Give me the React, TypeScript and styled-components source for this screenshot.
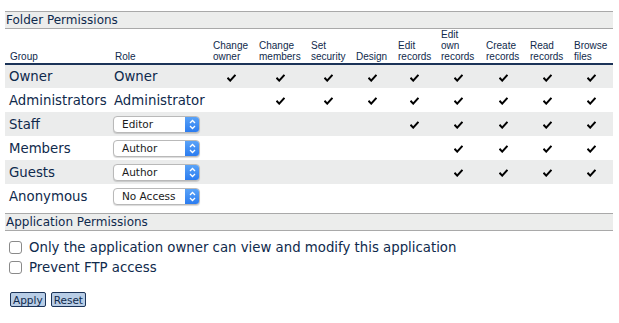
import React from 'react';
import styled, { createGlobalStyle } from 'styled-components';

const GlobalStyle = createGlobalStyle`
  body {
    margin: 0;
    background: #fff;
    font-family: "DejaVu Sans", Verdana, sans-serif;
    color: #0f2a4c;
  }
`;

const Page = styled.div`
  padding: 11px 6px 0 5px;
`;

const SectionHeader = styled.div`
  background: #ecedec;
  border-top: 1px solid #a9a9a9;
  border-bottom: 1px solid #a9a9a9;
  font-size: 12px;
  line-height: 16px;
  padding: 0 1px;
  color: #0f2a4c;
`;

const Table = styled.table`
  width: 608px;
  border-collapse: collapse;
  table-layout: fixed;
`;

const Th = styled.th`
  font-family: "Liberation Sans", Arial, sans-serif;
  font-size: 10px;
  line-height: 11px;
  font-weight: normal;
  text-align: left;
  vertical-align: bottom;
  padding: 0 0 1px 5px;
  border-bottom: 2px solid #1b3358;
  color: #0f2a4c;
`;

const Row = styled.tr<{ $shaded: boolean }>`
  height: 24px;
  background: ${(p) => (p.$shaded ? '#ebecec' : '#fff')};
`;

const TextCell = styled.td`
  font-size: 13.3px;
  padding: 0 0 0 4px;
  white-space: nowrap;
`;

const CheckCell = styled.td`
  text-align: center;
  padding: 0;
`;

const SelectBox = styled.div`
  display: inline-flex;
  align-items: stretch;
  width: 87px;
  height: 17px;
  margin-left: -1px;
  border: 1px solid #b9b9b9;
  border-radius: 4px;
  background: #fff;
  box-sizing: border-box;
  overflow: hidden;
  vertical-align: middle;
  box-shadow: 0 1px 1px rgba(0, 0, 0, 0.15);
`;

const SelectLabel = styled.span`
  flex: 1;
  font-size: 10.5px;
  line-height: 15px;
  padding-left: 8px;
  color: #1a1a1a;
`;

const SelectArrow = styled.span`
  width: 14px;
  background: linear-gradient(#5aa3f7, #2b7cf0);
  display: flex;
  align-items: center;
  justify-content: center;
`;

const AppSection = styled.div`
  margin-top: 5px;
`;

const CheckList = styled.div`
  padding: 8px 0 0 4px;
  display: flex;
  flex-direction: column;
  gap: 3px;
`;

const CheckRow = styled.label`
  display: flex;
  align-items: center;
  gap: 7px;
  font-size: 13.3px;
  line-height: 17px;
`;

const Box = styled.span`
  width: 11px;
  height: 11px;
  border: 1px solid #8a8a8a;
  border-radius: 3px;
  background: #fff;
  display: inline-block;
`;

const Buttons = styled.div`
  display: flex;
  gap: 5px;
  padding: 16px 0 0 5px;
`;

const Button = styled.button`
  font-family: "DejaVu Sans", Verdana, sans-serif;
  font-size: 10.5px;
  line-height: 12px;
  color: #0f2a4c;
  background: #b8cde6;
  border: 1px solid #1b3358;
  border-radius: 2px;
  padding: 0 2px;
  height: 15px;
`;

const Check = () => (
  <svg width="9" height="8" viewBox="0 0 9 8" style={{ display: 'inline-block', verticalAlign: 'middle' }}>
    <path d="M0.5 3.8 L3.2 6.6 L8.4 0.8" stroke="#000" strokeWidth="2" fill="none" />
  </svg>
);

const Arrows = () => (
  <svg width="7" height="11" viewBox="0 0 7 11">
    <path d="M1 4 L3.5 1.5 L6 4 M1 7 L3.5 9.5 L6 7" stroke="#fff" strokeWidth="1.3" fill="none" />
  </svg>
);

const widths = [46, 52, 45, 42, 43, 45, 44, 44, 44];

const headerLabels: React.ReactNode[] = [
  <>Change<br />owner</>,
  <>Change<br />members</>,
  <>Set<br />security</>,
  <>Design</>,
  <>Edit<br />records</>,
  <>Edit<br />own<br />records</>,
  <>Create<br />records</>,
  <>Read<br />records</>,
  <>Browse<br />files</>,
];

interface IGroupRow {
  group: string;
  role: string;
  select?: boolean;
  perms: boolean[];
}

const all = [true, true, true, true, true, true, true, true, true];
const rows: IGroupRow[] = [
  { group: 'Owner', role: 'Owner', perms: all },
  { group: 'Administrators', role: 'Administrator', perms: [false, ...all.slice(1)] },
  { group: 'Staff', role: 'Editor', select: true, perms: [false, false, false, false, true, true, true, true, true] },
  { group: 'Members', role: 'Author', select: true, perms: [false, false, false, false, false, true, true, true, true] },
  { group: 'Guests', role: 'Author', select: true, perms: [false, false, false, false, false, true, true, true, true] },
  { group: 'Anonymous', role: 'No Access', select: true, perms: [false, false, false, false, false, false, false, false, false] },
];

export default function App() {
  return (
    <Page>
      <GlobalStyle />
      <SectionHeader>Folder Permissions</SectionHeader>
      <Table>
        <colgroup>
          <col style={{ width: 105 }} />
          <col style={{ width: 98 }} />
          {widths.map((w, i) => (
            <col key={i} style={{ width: w }} />
          ))}
        </colgroup>
        <thead>
          <tr>
            <Th style={{ height: 33 }}>Group</Th>
            <Th>Role</Th>
            {headerLabels.map((l, i) => (
              <Th key={i}>{l}</Th>
            ))}
          </tr>
        </thead>
        <tbody>
          {rows.map((r, i) => (
            <Row key={r.group} $shaded={i % 2 === 0}>
              <TextCell>{r.group}</TextCell>
              <TextCell>
                {r.select ? (
                  <SelectBox>
                    <SelectLabel>{r.role}</SelectLabel>
                    <SelectArrow>
                      <Arrows />
                    </SelectArrow>
                  </SelectBox>
                ) : (
                  r.role
                )}
              </TextCell>
              {r.perms.map((p, j) => (
                <CheckCell key={j}>{p ? <Check /> : null}</CheckCell>
              ))}
            </Row>
          ))}
        </tbody>
      </Table>
      <AppSection>
        <SectionHeader>Application Permissions</SectionHeader>
        <CheckList>
          <CheckRow>
            <Box />
            Only the application owner can view and modify this application
          </CheckRow>
          <CheckRow>
            <Box />
            Prevent FTP access
          </CheckRow>
        </CheckList>
        <Buttons>
          <Button>Apply</Button>
          <Button>Reset</Button>
        </Buttons>
      </AppSection>
    </Page>
  );
}
